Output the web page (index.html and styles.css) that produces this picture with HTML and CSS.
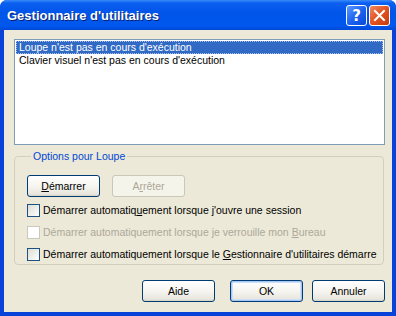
FILE: index.html
```html
<!DOCTYPE html>
<html lang="fr">

<head>
    <meta charset="UTF-8">
    <title>Gestionnaire d'utilitaires</title>
    <link rel="stylesheet" href="styles.css">
</head>

<body>

    <div class="window">
        <!-- Title bar -->
        <div class="titlebar">
            <span class="title">Gestionnaire d'utilitaires</span>
            <div class="caption-buttons">
                <span class="cap-btn help">?</span>
                <span class="cap-btn close">
                    <svg width="13" height="13" viewBox="0 0 13 13">
                        <path d="M2 2 L11 11 M11 2 L2 11" stroke="#fff" stroke-width="2" stroke-linecap="square" />
                    </svg>
                </span>
            </div>
        </div>

        <div class="client">
            <!-- Utility list -->
            <div class="listbox">
                <div class="list-item selected">Loupe n'est pas en cours d'exécution</div>
                <div class="list-item">Clavier visuel n'est pas en cours d'exécution</div>
            </div>

            <!-- Options group -->
            <fieldset class="group">
                <legend>Options pour Loupe</legend>
                <div class="group-buttons">
                    <button class="btn"><u>D</u>émarrer</button>
                    <button class="btn" disabled>A<u>r</u>rêter</button>
                </div>
                <label class="check"><span class="box"></span><span class="check-text">Démarrer automatiq<u>u</u>ement lorsque j'ouvre une session</span></label>
                <label class="check disabled"><span class="box"></span><span class="check-text">Démarrer automatiquement lorsque je verrouille mon <u>B</u>ureau</span></label>
                <label class="check"><span class="box"></span><span class="check-text">Démarrer automatiquement lorsque le <u>G</u>estionnaire d'utilitaires démarre</span></label>
            </fieldset>

            <!-- Dialog buttons -->
            <div class="dialog-buttons">
                <button class="btn btn-help">Aide</button>
                <button class="btn btn-ok">OK</button>
                <button class="btn btn-cancel">Annuler</button>
            </div>
        </div>
    </div>

</body>

</html>
```

FILE: styles.css
```css
body {
    margin: 0;
    background-color: #ffffff;
    font-family: "Liberation Sans", Arial, sans-serif;
    font-size: 10.5px;
}

.window {
    width: 396px;
    height: 316px;
    display: flex;
    flex-direction: column;
    background: #0842d8;
    border-radius: 7px 7px 0 0;
    overflow: hidden;
}

.titlebar {
    height: 30px;
    display: flex;
    align-items: center;
    justify-content: space-between;
    padding: 0 6px 0 7px;
    box-sizing: border-box;
    background: linear-gradient(to bottom, #3a8cf8 0, #0a5ff0 10%, #0054e8 45%, #0058ee 85%, #0049d8 100%);
}

.title {
    color: #ffffff;
    font-family: "Liberation Sans", Arial, sans-serif;
    font-weight: bold;
    font-size: 13px;
    text-shadow: 1px 1px 0 #0a1f70;
    padding-top: 1px;
}

.caption-buttons {
    display: flex;
    gap: 2px;
    padding-top: 1px;
}

.cap-btn {
    width: 19px;
    height: 19px;
    border: 1px solid #ffffff;
    border-radius: 3px;
    display: flex;
    align-items: center;
    justify-content: center;
    color: #ffffff;
}

.help {
    background: linear-gradient(135deg, #5b9bff 0, #1f63f0 50%, #0a48d8 100%);
    font-family: "DejaVu Sans", sans-serif;
    font-weight: bold;
    font-size: 15px;
}

.close {
    background: linear-gradient(135deg, #f08a60 0, #e2521f 50%, #c83b10 100%);
}

.client {
    flex: 1;
    margin: 0 4px 4px 4px;
    background: #ece9d8;
    padding: 9px 7px 0 10px;
    display: flex;
    flex-direction: column;
}

.listbox {
    height: 102px;
    border: 1px solid #7f9db9;
    background: #ffffff;
    padding: 1px;
}

.list-item {
    height: 13px;
    line-height: 13px;
    padding-left: 3px;
    color: #000000;
}

.list-item.selected {
    background: #316ac5;
    color: #ffffff;
    outline: 1px dotted #a8c0e8;
    outline-offset: -1px;
}

.group {
    margin: 5px 1px 0 0;
    padding: 12px 0 0 12px;
    height: 115px;
    box-sizing: border-box;
    border: 1px solid #d0d0bf;
    border-radius: 4px;
    min-width: 0;
}

.group legend {
    color: #0046d5;
    padding: 0 2px;
    margin-left: 4px;
    line-height: 13px;
}

.group-buttons {
    display: flex;
    gap: 12px;
    margin-bottom: 7px;
}

.btn {
    width: 73px;
    height: 22px;
    padding: 0;
    font-family: "Liberation Sans", Arial, sans-serif;
    font-size: 10.5px;
    color: #000000;
    border: 1px solid #003c74;
    border-radius: 3px;
    background: linear-gradient(to bottom, #ffffff 0, #f6f5f1 50%, #e8e6dd 90%, #d6d0c5 100%);
}

.btn:disabled {
    border-color: #c9c7ba;
    color: #aca899;
    background: #f5f4ea;
}

.btn-ok {
    box-shadow: inset 0 0 0 1px #a8c7f5, inset 0 0 0 2px #cde0fb;
}

.check {
    display: flex;
    align-items: center;
    height: 13px;
    line-height: 13px;
    margin-bottom: 9px;
    color: #000000;
}

.check-text {
    white-space: nowrap;
}

.check.disabled {
    color: #aca899;
}

.box {
    width: 11px;
    height: 11px;
    border: 1px solid #1c5180;
    background: linear-gradient(135deg, #dcdcd7 0, #f4f4f2 70%, #ffffff 100%);
    margin-right: 3px;
    flex-shrink: 0;
}

.check.disabled .box {
    border-color: #cac8bb;
    background: #ffffff;
}

.dialog-buttons {
    display: flex;
    margin-top: 15px;
    padding-left: 128px;
}

.btn-ok {
    margin-left: 15px;
}

.btn-cancel {
    margin-left: 9px;
}
```
